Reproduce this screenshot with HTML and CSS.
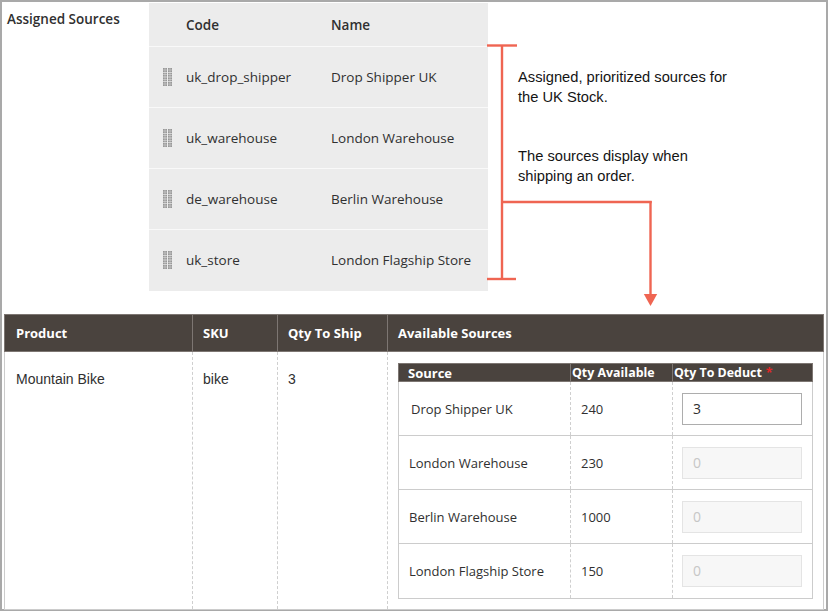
FILE: index.html
```html
<!DOCTYPE html>
<html lang="en">
<head>
<meta charset="utf-8">
<title>Assigned Sources</title>
<link rel="stylesheet" href="styles.css">
</head>
<body>
<svg class="defs" width="0" height="0" aria-hidden="true">
  <defs>
    <g id="sq">
      <rect x="0" y="0" width="1.8" height="1.8"/>
      <rect x="2.2" y="0" width="1.8" height="1.8"/>
      <rect x="0" y="2.2" width="1.8" height="1.8"/>
      <rect x="2.2" y="2.2" width="1.8" height="1.8"/>
    </g>
    <symbol id="grip" viewBox="0 0 9 18">
      <g fill="#989898">
        <use href="#sq" x="0" y="0"/><use href="#sq" x="5" y="0"/>
        <use href="#sq" x="0" y="4.67"/><use href="#sq" x="5" y="4.67"/>
        <use href="#sq" x="0" y="9.33"/><use href="#sq" x="5" y="9.33"/>
        <use href="#sq" x="0" y="14"/><use href="#sq" x="5" y="14"/>
      </g>
    </symbol>
  </defs>
</svg>
<div class="page">
  <div class="frame">
    <section class="top">
      <div class="label">Assigned Sources</div>
      <div class="grid">
        <div class="grid-head">
          <span></span><span>Code</span><span>Name</span>
        </div>
        <div class="grid-row">
          <span class="handle"><svg width="9" height="18"><use href="#grip"/></svg></span>
          <span>uk_drop_shipper</span><span>Drop Shipper UK</span>
        </div>
        <div class="grid-row">
          <span class="handle"><svg width="9" height="18"><use href="#grip"/></svg></span>
          <span>uk_warehouse</span><span>London Warehouse</span>
        </div>
        <div class="grid-row">
          <span class="handle"><svg width="9" height="18"><use href="#grip"/></svg></span>
          <span>de_warehouse</span><span>Berlin Warehouse</span>
        </div>
        <div class="grid-row">
          <span class="handle"><svg width="9" height="18"><use href="#grip"/></svg></span>
          <span>uk_store</span><span>London Flagship Store</span>
        </div>
      </div>
      <div class="notes">
        <p>Assigned, prioritized sources for<br>the UK Stock.</p>
        <p>The sources display when<br>shipping an order.</p>
      </div>
    </section>

    <div class="ship">
      <div class="ship-head">
        <div class="sh">Product</div>
        <div class="sh">SKU</div>
        <div class="sh">Qty To Ship</div>
        <div class="sh">Available Sources</div>
      </div>
      <div class="ship-body">
        <div class="sc">Mountain Bike</div>
        <div class="sc">bike</div>
        <div class="sc">3</div>
        <div class="sc sources-cell">
          <div class="src">
            <div class="src-head">
              <div class="srh first">Source</div>
              <div class="srh">Qty Available</div>
              <div class="srh">Qty To Deduct <span class="req">*</span></div>
            </div>
            <div class="src-row">
              <div class="srd first shift">Drop Shipper UK</div>
              <div class="srd">240</div>
              <div class="srd inp"><div class="field">3</div></div>
            </div>
            <div class="src-row">
              <div class="srd first">London Warehouse</div>
              <div class="srd">230</div>
              <div class="srd inp"><div class="field off">0</div></div>
            </div>
            <div class="src-row">
              <div class="srd first">Berlin Warehouse</div>
              <div class="srd">1000</div>
              <div class="srd inp"><div class="field off">0</div></div>
            </div>
            <div class="src-row last">
              <div class="srd first">London Flagship Store</div>
              <div class="srd">150</div>
              <div class="srd inp"><div class="field off">0</div></div>
            </div>
          </div>
        </div>
      </div>
    </div>
  </div>

  <svg class="overlay" width="828" height="612" viewBox="0 0 828 612" aria-hidden="true">
    <g stroke="#ef6552" stroke-width="2.4" fill="none">
      <line x1="487" y1="45.5" x2="517" y2="45.5"/>
      <line x1="502" y1="45.5" x2="502" y2="279"/>
      <line x1="487" y1="279" x2="516" y2="279"/>
      <line x1="502" y1="202" x2="651.7" y2="202"/>
      <line x1="650.5" y1="201" x2="650.5" y2="296"/>
    </g>
    <polygon points="643.8,294 657.2,294 650.5,306" fill="#ef6552"/>
  </svg>
</div>
</body>
</html>
```

FILE: styles.css
```css
body {
  margin: 0;
  background: #fff;
}

.defs {
  position: absolute;
  width: 0;
  height: 0;
  overflow: hidden;
}

.page {
  position: relative;
  width: 828px;
  height: 612px;
}

.frame {
  box-sizing: border-box;
  width: 828px;
  height: 611px;
  border: 2px solid #a9a9a9;
  display: flex;
  flex-direction: column;
}

/* ---------- top: assigned sources ---------- */
.top {
  display: flex;
  height: 312px;
  flex: none;
}

.label {
  box-sizing: border-box;
  width: 147px;
  padding: 7px 0 0 5px;
  font: 600 13.5px/20px "Open Sans", sans-serif;
  color: #303030;
}

.grid {
  margin-top: 1px;
  width: 339px;
  height: 288px;
  background: #ececec;
  display: flex;
  flex-direction: column;
  font: 13.5px/20px "Open Sans", sans-serif;
  color: #303030;
}

.grid-head,
.grid-row {
  display: grid;
  grid-template-columns: 37px 145px 1fr;
  align-items: center;
}

.grid-head {
  height: 43px;
  font-weight: 600;
}

.grid-row {
  height: 60px;
  border-top: 1px solid #f9f9f9;
}

.handle {
  padding-left: 14px;
  display: flex;
  align-items: center;
}

.handle svg {
  display: block;
}

.notes {
  padding: 66px 0 0 30px;
  font: 14.7px/19.7px "Liberation Sans", Arial, sans-serif;
  color: #141414;
}

.notes p {
  margin: 0;
}

.notes p + p {
  margin-top: 40px;
}

.overlay {
  position: absolute;
  top: 0;
  left: 0;
  pointer-events: none;
}

/* ---------- bottom: shipment grid ---------- */
.ship {
  margin: 0 2px;
  flex: none;
}

.ship-head,
.ship-body {
  display: grid;
  grid-template-columns: 187px 85px 110px 1fr;
}

.ship-head {
  height: 38px;
  box-sizing: border-box;
  background: #4a433e;
  border: 1px solid #7d7672;
  align-items: center;
}

.sh {
  box-sizing: border-box;
  height: 100%;
  display: flex;
  align-items: center;
  padding-left: 10px;
  font: 700 13px/18px "Open Sans", sans-serif;
  color: #fff;
  border-left: 1px solid #7d7672;
}

.sh:first-child {
  border-left: none;
  padding-left: 11px;
}

.ship-body {
  border: 1px solid #cccccc;
  border-top: none;
}

.sc {
  box-sizing: border-box;
  padding: 17px 0 0 10px;
  font: 14px/20px "Liberation Sans", Arial, sans-serif;
  color: #303030;
  border-left: 1px dashed #cfcfcf;
}

.sc:first-child {
  border-left: none;
  padding-left: 11px;
}

.sources-cell {
  padding: 11px 10px 10px 10px;
}

.src {
  border: 1px solid #cccccc;
  border-top: none;
  font: 13px/18px "Open Sans", sans-serif;
  color: #303030;
}

.src-head,
.src-row {
  display: grid;
  grid-template-columns: 171px 102px 1fr;
}

.src-head {
  height: 19px;
  box-sizing: border-box;
  background: #4a433e;
  margin: 0 -1px;
  border: 1px solid #7d7672;
}

.srh {
  box-sizing: border-box;
  display: flex;
  align-items: center;
  padding-left: 1px;
  font-size: 12.4px;
  font-weight: 700;
  color: #fff;
  border-left: 1px solid #7d7672;
  white-space: nowrap;
}

.srh.first {
  border-left: none;
  padding-left: 9px;
  font-size: 13px;
}

.req {
  color: #e22626;
  margin-left: 4px;
}

.src-row {
  height: 54px;
  box-sizing: border-box;
  border-bottom: 1px solid #cccccc;
}

.src-row.last {
  border-bottom: none;
}

.srd {
  box-sizing: border-box;
  display: flex;
  align-items: center;
  padding-left: 10px;
  border-left: 1px dashed #cfcfcf;
}

.srd.first {
  border-left: none;
  padding-left: 10px;
}

.srd.shift {
  padding-left: 12px;
}

.srd.inp {
  padding-left: 9px;
}

.field {
  box-sizing: border-box;
  width: 120px;
  height: 32px;
  border: 1px solid #adadad;
  background: #fff;
  padding-left: 10px;
  display: flex;
  align-items: center;
  font: 14px/20px "Open Sans", sans-serif;
  color: #303030;
}

.field.off {
  background: #f7f7f7;
  border-color: #e4e4e4;
  color: #c6c6c6;
}
```
